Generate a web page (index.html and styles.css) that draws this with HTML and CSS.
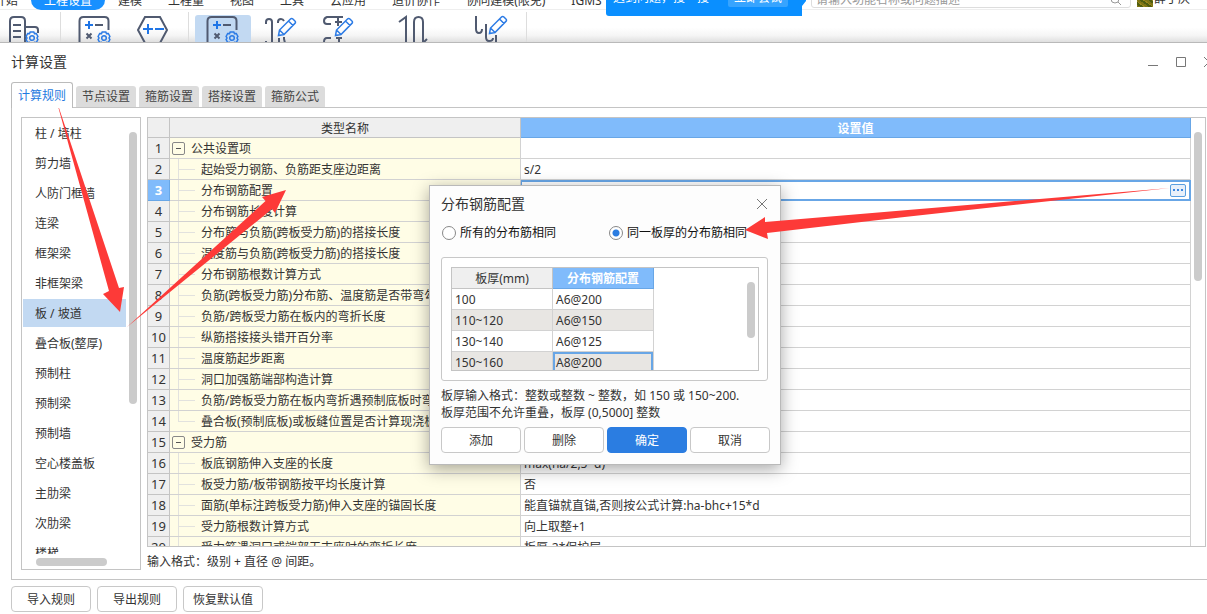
FILE: index.html
```html
<!DOCTYPE html>
<html lang="zh-CN">
<head>
<meta charset="utf-8">
<title>计算设置</title>
<link rel="stylesheet" href="styles.css">
</head>
<body>
<svg class="defs" aria-hidden="true">
  <symbol id="gear" viewBox="0 0 14 14"><path d="M5.2 1h3.6l.7 1.6 1.8-.1 1.6 2.9L12 7l.9 1.6-1.6 2.9-1.8-.1L8.800 13H5.200l-.7-1.600-1.800.1-1.600-2.900L2 7l-.9-1.600 1.600-2.900 1.800.1z"/><circle cx="7" cy="7" r="2.300"/></symbol>
  <symbol id="pencil" viewBox="0 0 20 20"><path d="M1.500 18.500l1-5.500L13.500 2q1.200-1.200 2.400 0l2 2q1.200 1.200 0 2.400L7 17.500zM2.500 13l4.500 4.500M11.500 4l4.500 4.500"/></symbol>
  <symbol id="calc" viewBox="0 0 34 32"><path class="ink" d="M1.500 33V11q0-4 4-4h21q4 0 4 4v9M17 15h8M8.500 23.500l5 5M13.500 23.500l-5 5"/><path class="accent" d="M7 15h8M11 11v8"/><use class="thin" href="#gear" x="19" y="21" width="14" height="14"/></symbol>
</svg>

<header class="app">
  <nav class="menu">
    <a href="#">开始</a><a href="#" class="on">工程设置</a><a href="#">建模</a><a href="#">工程量</a><a href="#">视图</a><a href="#">工具</a><a href="#">云应用</a><a href="#">造价协作</a><a href="#">协同建模(限免)</a><a href="#">IGMS</a>
    <div class="search">
      <input type="text" aria-label="搜索" placeholder="请输入功能名称或问题描述">
      <svg width="12" height="20" viewBox="0 0 12 20"><circle cx="5" cy="9" r="4"/><path d="M8 12l3 3"/></svg>
    </div>
    <div class="user"><span class="avatar"></span>薛丁庆</div>
  </nav>
  <div class="tools">
    <button class="tool w50" aria-label="工程信息"><svg viewBox="0 0 34 32"><path class="ink" d="M2 33V11q0-4 4-4h7q4 0 4 4v22M5 15h8M5 21h8M5 27h8M17 17h10q3 0 3 3v3"/><use class="thin" href="#gear" x="17" y="21" width="14" height="14"/></svg></button>
    <i class="sep"></i>
    <button class="tool" aria-label="计算规则"><svg viewBox="0 0 34 32"><use href="#calc"/></svg></button>
    <button class="tool" aria-label="楼层设置"><svg viewBox="0 0 34 32"><path class="ink" d="M2 20L9 7h15l7 13-7 13H9z"/><path class="accent" d="M7 19h10M12 14v10M19 19h9"/></svg></button>
    <i class="sep mid"></i>
    <button class="tool picked" aria-label="计算设置"><svg viewBox="0 0 34 32"><use href="#calc"/></svg></button>
    <button class="tool" aria-label="比重设置"><svg viewBox="0 0 34 32"><path class="ink" d="M2 14v-2q0-3 3-3t3 3v21M14 13v-1q0-3 3-3 2 0 3 2M15 28v5M20 27v2l1 4M2 31v2"/><use class="thin" href="#pencil" x="13" y="7" width="20" height="20"/></svg></button>
    <button class="tool" aria-label="弯钩设置"><svg viewBox="0 0 34 32"><path class="ink" d="M21 7H5Q2 8 2 11t3 3h4M13 12h7M16 8v8M9 28H5q-3 0-3 4M14 28h6M17 28v5"/><use class="thin" href="#pencil" x="12" y="7" width="20" height="20"/></svg></button>
    <button class="tool w92" aria-label="弯曲调整值"><svg viewBox="0 0 34 32"><path class="ink" d="M2 12l7-5v26M17 33V12q0-5 4.500-5T26 12v21M30 29l-4 4"/></svg></button>
    <button class="tool w62" aria-label="损耗设置"><svg viewBox="0 0 34 32"><path class="ink" d="M2 6v13q0 4 3 4t3-4M12 14v13q0 4 3 4 4 0 4-3M22 25v8"/><use class="thin" href="#pencil" x="14" y="5" width="20" height="20"/></svg></button>
    <i class="sep"></i>
  </div>
  <div class="tip"><span>遇到问题，搜一搜</span><button>立即尝试</button></div>
</header>

<main class="window">
  <div class="titlebar">
    <h1>计算设置</h1>
    <div class="winbtns">
      <button aria-label="最小化"><svg width="12" height="12"><path d="M1 9.500h10"/></svg></button>
      <button aria-label="最大化"><svg width="12" height="12"><path d="M1.500 1.500h9v9h-9z"/></svg></button>
      <button aria-label="关闭"><svg width="12" height="12"><path d="M1 1l10 10M11 1L1 11"/></svg></button>
    </div>
  </div>
  <div class="tabs" role="tablist">
    <button role="tab" class="on">计算规则</button><button role="tab">节点设置</button><button role="tab">箍筋设置</button><button role="tab">搭接设置</button><button role="tab">箍筋公式</button>
  </div>
  <section class="panel">
    <aside class="side">
      <ul>
        <li>柱 / 墙柱</li><li>剪力墙</li><li>人防门框墙</li><li>连梁</li><li>框架梁</li><li>非框架梁</li><li class="on">板 / 坡道</li><li>叠合板(整厚)</li><li>预制柱</li><li>预制梁</li><li>预制墙</li><li>空心楼盖板</li><li>主肋梁</li><li>次肋梁</li><li>楼梯</li>
      </ul>
      <div class="vbar"><i class="thumb"></i></div>
      <div class="hbar"><i class="thumb"></i></div>
    </aside>
    <div class="content">
      <div class="gridbox">
        <div class="scroll">
          <table class="grid">
            <colgroup><col class="c1"><col class="c2"><col></colgroup>
            <thead><tr><th></th><th>类型名称</th><th class="sel">设置值</th></tr></thead>
            <tbody>
              <tr class="group"><th>1</th><td><button aria-label="折叠"></button>公共设置项</td><td></td></tr>
              <tr><th>2</th><td>起始受力钢筋、负筋距支座边距离</td><td>s/2</td></tr>
              <tr class="current"><th>3</th><td>分布钢筋配置</td><td><button class="more" aria-label="更多"><i></i><i></i><i></i></button></td></tr>
              <tr><th>4</th><td>分布钢筋长度计算</td><td></td></tr>
              <tr><th>5</th><td>分布筋与负筋(跨板受力筋)的搭接长度</td><td></td></tr>
              <tr><th>6</th><td>温度筋与负筋(跨板受力筋)的搭接长度</td><td></td></tr>
              <tr><th>7</th><td>分布钢筋根数计算方式</td><td></td></tr>
              <tr><th>8</th><td>负筋(跨板受力筋)分布筋、温度筋是否带弯勾</td><td></td></tr>
              <tr><th>9</th><td>负筋/跨板受力筋在板内的弯折长度</td><td></td></tr>
              <tr><th>10</th><td>纵筋搭接接头错开百分率</td><td></td></tr>
              <tr><th>11</th><td>温度筋起步距离</td><td></td></tr>
              <tr><th>12</th><td>洞口加强筋端部构造计算</td><td></td></tr>
              <tr><th>13</th><td>负筋/跨板受力筋在板内弯折遇预制底板时弯折</td><td></td></tr>
              <tr class="last"><th>14</th><td>叠合板(预制底板)或板缝位置是否计算现浇板</td><td></td></tr>
              <tr class="group"><th>15</th><td><button aria-label="折叠"></button>受力筋</td><td></td></tr>
              <tr><th>16</th><td>板底钢筋伸入支座的长度</td><td>max(ha/2,5*d)</td></tr>
              <tr><th>17</th><td>板受力筋/板带钢筋按平均长度计算</td><td>否</td></tr>
              <tr><th>18</th><td>面筋(单标注跨板受力筋)伸入支座的锚固长度</td><td>能直锚就直锚,否则按公式计算:ha-bhc+15*d</td></tr>
              <tr><th>19</th><td>受力筋根数计算方式</td><td>向上取整+1</td></tr>
              <tr><th>20</th><td>受力筋遇洞口或端部无支座时的弯折长度</td><td>板厚-2*保护层</td></tr>
            </tbody>
          </table>
        </div>
        <div class="vbar"><i class="thumb"></i></div>
      </div>
      <p class="hint">输入格式：级别 + 直径 @ 间距。</p>
    </div>
  </section>
  <footer class="actions"><button class="btn">导入规则</button><button class="btn">导出规则</button><button class="btn">恢复默认值</button></footer>
</main>

<form class="modal" role="dialog" aria-labelledby="mt">
  <div class="mhead"><h2 id="mt">分布钢筋配置</h2><button type="button" aria-label="关闭"><svg width="12" height="12"><path d="M1 1l10 10M11 1L1 11"/></svg></button></div>
  <div class="radios">
    <label><input type="radio" name="mode">所有的分布筋相同</label>
    <label><input type="radio" name="mode" checked>同一板厚的分布筋相同</label>
  </div>
  <div class="frame">
    <div class="minibox">
      <table class="mini">
        <thead><tr><th>板厚(mm)</th><th class="sel">分布钢筋配置</th></tr></thead>
        <tbody>
          <tr><td>100</td><td>A6@200</td></tr>
          <tr><td>110~120</td><td>A6@150</td></tr>
          <tr><td>130~140</td><td>A6@125</td></tr>
          <tr><td>150~160</td><td class="edit">A8@200</td></tr>
        </tbody>
      </table>
      <div class="vbar"><i class="thumb"></i></div>
    </div>
  </div>
  <p class="note">板厚输入格式：整数或整数 ~ 整数，如 150 或 150~200.<br>板厚范围不允许重叠，板厚 (0,5000] 整数</p>
  <div class="mbtns"><button type="button" class="btn">添加</button><button type="button" class="btn">删除</button><button type="button" class="btn primary">确定</button><button type="button" class="btn">取消</button></div>
</form>

<svg class="arrows" width="1207" height="614" aria-hidden="true">
  <path d="M56 99L109 291l-6 3 17 18 4-25-5 1z"/>
  <path d="M127 327L265.500 201l-3.500-4 24-7-11 23-3-4z"/>
  <path d="M1170 188L765 222v-5l-20 13 23 9-1-6L900 217.500z"/>
</svg>
</body>
</html>
```
FILE: styles.css
```css
* { box-sizing: border-box; }
body {
  margin: 0;
  height: 100vh;
  display: flex;
  flex-direction: column;
  position: relative;
  overflow: hidden;
  background: #fff;
  color: #333;
  font: 12px/20px "Noto Sans", "Noto Sans CJK SC", sans-serif;
}
button, input { font: inherit; color: inherit; }
button { padding: 0; border: 0; background: none; }
h1, h2, p, ul { margin: 0; padding: 0; font-weight: 400; }
svg { display: block; fill: none; }
.defs { position: absolute; width: 0; height: 0; }

/* ribbon */
.app { position: relative; flex: none; }
.menu {
  display: flex;
  align-items: flex-end;
  height: 10px;
  overflow: hidden;
  box-shadow: inset 0 -1px #eee;
  padding-right: 17px;
  white-space: nowrap;
}
.menu a { flex: none; height: 20px; padding: 0 13px; line-height: 22px; color: #333; text-decoration: none; }
.menu a:first-child { margin-left: -19px; }
.menu .on { background: #1890ff; color: #fff; border-radius: 10px; }
.search {
  display: flex;
  align-items: center;
  width: 320px;
  height: 16px;
  margin: 0 6px 2px auto;
  padding: 0 8px 0 4px;
  border: 1px solid #ddd;
  border-radius: 3px;
}
.search input { flex: 1; min-width: 0; height: 20px; padding: 0; border: 0; outline: 0; background: none; }
.search input::placeholder { color: #999; }
.search svg { stroke: #999; }
.user { display: flex; align-items: flex-end; gap: 1px; height: 20px; line-height: 22px; }
.avatar {
  width: 16px;
  height: 16px;
  margin-bottom: 3px;
  background: repeating-linear-gradient(35deg, #7c7414 0 2px, #4f5d0e 2px 4px, #99861a 4px 5px);
}
.tools {
  display: flex;
  height: 32px;
  overflow: hidden;
  background: linear-gradient(#fff 55%, #f5f5f5 80%, #dfdfdf);
}
.tool { flex: none; width: 58px; }
.tool svg { width: 34px; height: 32px; margin: 0 auto; }
.w50 { width: 50px; margin-right: 10px; }
.w92 { width: 92px; }
.w62 { width: 62px; margin-right: 4px; }
.picked { width: 56px; height: 27px; margin: 5px 1px 0 0; border-radius: 3px 3px 0 0; background: #c2d9f2; }
.picked svg { margin-top: -5px; }
.sep { flex: none; width: 1px; margin: 2px 5px 0 0; background: #ddd; }
.mid { margin: 2px 6px 0; }
.ink { stroke: #505a70; stroke-width: 2; }
.accent { stroke: #1f75e6; stroke-width: 2; }
.thin { stroke: #2c7be5; stroke-width: 1.5; }
.tip {
  position: absolute;
  left: 606px;
  bottom: 26px;
  width: 200px;
  height: 26px;
  padding: 0 18px 9px 7px;
  display: flex;
  align-items: flex-end;
  justify-content: space-between;
  background: #0a8fff;
  color: #fff;
  border-radius: 3px;
  clip-path: polygon(0 0, 100% 0, 100% 11px, 196px 16px, 196px 100%, 0 100%);
}
.tip span, .tip button { height: 20px; line-height: 22px; }
.tip button { width: 60px; border-radius: 2px; background: #37a4ff; }

/* settings window */
.window { flex: 1; min-height: 0; display: flex; flex-direction: column; border-top: 1px solid #b9b9b9; background: #fff; }
.titlebar { display: flex; align-items: center; justify-content: space-between; height: 39px; padding: 0 0 2px 11px; flex: none; }
h1, h2 { font-size: 14px; }
.winbtns { display: flex; gap: 16px; margin-right: -8px; }
.winbtns svg, .mhead svg { stroke: #777; }
.tabs { display: flex; align-items: flex-end; gap: 3px; height: 26px; flex: none; padding-left: 11px; position: relative; z-index: 1; margin-bottom: -1px; }
.tabs button { width: 60px; height: 21px; margin-bottom: 1px; background: #dcdcdc; border-radius: 3px 3px 0 0; color: #444; }
.tabs .on { width: 62px; height: 26px; margin-bottom: 0; background: #fff; border: 1px solid #bbb; border-bottom: 0; color: #1f7ae0; }
.panel {
  flex: 1;
  min-height: 0;
  display: flex;
  gap: 6px;
  margin-left: 11px;
  padding: 9px 0 9px 9px;
  border: solid #c4c4c4;
  border-width: 1px 0 1px 1px;
}
.side {
  flex: none;
  width: 120px;
  display: grid;
  grid-template: minmax(0, 1fr) 15px / 103px 1fr;
  padding: 1px 0 0 1px;
  border: 1px solid #c4c4c4;
}
.side ul { list-style: none; overflow: hidden; }
.side li { height: 28px; margin-bottom: 2px; padding: 2px 0 0 12px; line-height: 26px; white-space: nowrap; }
.side .on { background: #c2d9f2; }
.thumb { display: block; width: 8px; border-radius: 4px; background: #cbcbcb; }
.side .vbar { padding: 13px 0 0 3px; }
.side .vbar .thumb { height: 272px; }
.hbar { padding: 4px 0 0 13px; }
.hbar .thumb { width: 71px; height: 8px; }
.content { flex: 1; min-width: 0; display: flex; flex-direction: column; }
.gridbox { flex: 1; min-height: 0; display: flex; margin-right: 1px; border: 1px solid #c4c4c4; }
.scroll { flex: 1; min-width: 0; overflow: hidden; }
.gridbox .vbar { width: 14px; padding: 14px 0 0 3px; }
.gridbox .thumb { height: 149px; }
.grid, .mini { border-collapse: separate; border-spacing: 0; table-layout: fixed; width: 100%; }
.grid .c1 { width: 22px; }
.grid .c2 { width: 351px; }
.grid th, .grid td, .mini th, .mini td {
  height: 21px;
  padding: 2px 3px 0;
  line-height: 18px;
  border: solid #d2d2d2;
  border-width: 0 1px 1px 0;
  white-space: nowrap;
  overflow: hidden;
  font-weight: 400;
  text-align: left;
}
.grid th, .mini th { padding: 2px 0 0; background: #efefef; border-color: #c4c4c4; text-align: center; }
.grid tbody th { padding: 0; line-height: 20px; font-size: 13px; }
.grid thead th { height: 20px; line-height: 17px; }
.grid .sel, .mini .sel, .grid .current th { background: #80bbfb; border-color: #68a6e6; color: #fff; font-weight: 700; }
.grid td:nth-child(2) {
  padding-left: 31px;
  background:
    linear-gradient(#e2e2de, #e2e2de) 8px 0 / 1px 100% no-repeat,
    linear-gradient(#e2e2de, #e2e2de) 8px 10px / 17px 1px no-repeat,
    #fffde6;
}
.grid .last td:nth-child(2) { background-size: 1px 11px, 17px 1px, auto; }
.grid .group td:nth-child(2) { padding-left: 2px; background: #fffde6; }
.group button {
  width: 13px;
  height: 13px;
  margin: 0 6px 0 0;
  vertical-align: -1px;
  border: 1px solid #888;
  border-radius: 2px;
  background: linear-gradient(#555, #555) center / 5px 1px no-repeat;
}
.grid .current td:last-child { padding-top: 0; box-shadow: inset 0 0 0 1px #68a6e6, inset 0 2px #68a6e6; border-color: #68a6e6; }
.more {
  display: flex;
  align-items: center;
  justify-content: center;
  gap: 2px;
  width: 16px;
  height: 13px;
  margin: 0 1px 0 auto;
  border: 1px solid #5a9fe0;
  border-radius: 2px;
  background: #e8f0fa;
}
.more i { width: 2px; height: 2px; background: #3b87e0; }
.hint { flex: none; height: 23px; line-height: 30px; }
.actions { flex: none; display: flex; gap: 6px; padding: 6px 11px 2px; }
.btn { width: 80px; height: 26px; padding-top: 1px; border: 1px solid #c8c8c8; border-radius: 4px; background: #fff; }
.primary { background: #2b7de1; border-color: #2b7de1; color: #fff; }

/* floating dialog */
.modal {
  position: absolute;
  left: 429px;
  top: 185px;
  width: 352px;
  padding: 7px 11px 11px;
  border: 1px solid #b9b9b9;
  background: #fdfdfd;
  box-shadow: 0 4px 16px rgba(0, 0, 0, .35);
}
.mhead { display: flex; align-items: center; justify-content: space-between; height: 22px; padding-right: 1px; }
.radios { display: flex; height: 36px; color: #111; }
.radios label { flex: none; display: flex; align-items: center; gap: 4px; width: 167px; white-space: nowrap; }
.radios input {
  appearance: none;
  width: 14px;
  height: 14px;
  margin: 0 0 0 1px;
  border: 1px solid #888;
  border-radius: 50%;
  background: #fff;
}
.radios input:checked { background: radial-gradient(circle, #2b7de1 3px, #fff 4px); }
.frame { margin-top: 6px; margin-right: 1px; padding: 9px 8px 9px 9px; border: 1px solid #c8c8c8; border-radius: 3px; background: #fff; }
.minibox { display: flex; justify-content: space-between; height: 104px; overflow: hidden; border: 1px solid #c4c4c4; }
.mini { width: 202px; }
.mini tbody tr:nth-child(even) { background: #e8e6e3; }
.mini .edit { box-shadow: inset 0 0 0 2px #68a6e6; }
.minibox .vbar { padding: 14px 3px 0 0; }
.minibox .thumb { height: 56px; }
.note { margin-top: 6px; line-height: 17px; white-space: nowrap; }
.mbtns { display: flex; justify-content: space-between; margin: 6px -1px 0 0; }
.arrows { position: absolute; left: 0; top: 0; pointer-events: none; }
.arrows path { fill: #fd3a38; }
```
